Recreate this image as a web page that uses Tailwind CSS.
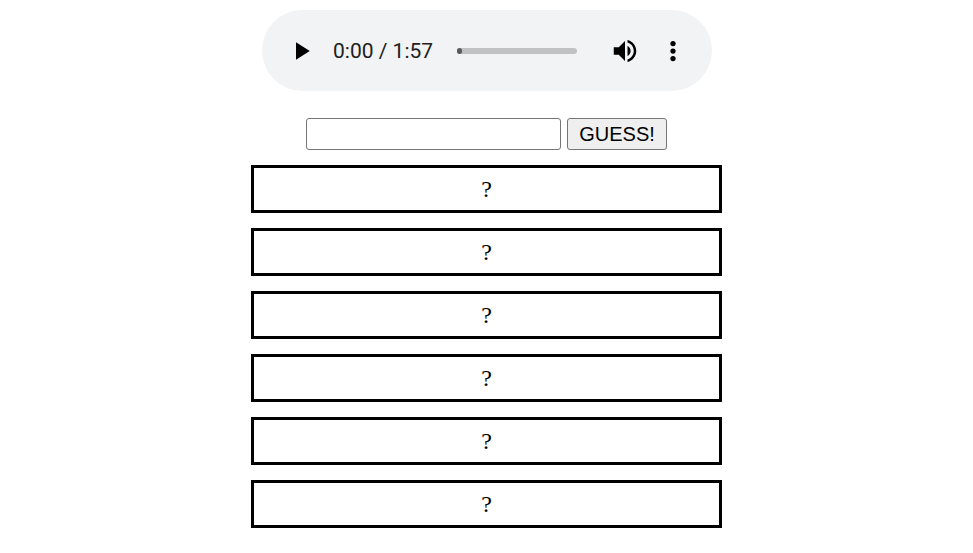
<!DOCTYPE html>
<html lang="en">
<head>
<meta charset="utf-8">
<title>Guess the song</title>
<script src="https://cdn.jsdelivr.net/npm/@tailwindcss/browser@4"></script>
</head>
<body class="bg-white text-black h-[553px] overflow-hidden">
<main class="w-[471px] ml-[251px] pt-[10px] flex flex-col">
  <div class="ml-[11px] w-[450px] h-[81px] rounded-full bg-[#f1f3f4] flex items-center pl-6">
    <button class="size-[30px] shrink-0" aria-label="Play">
      <svg class="size-[30px]" viewBox="0 0 24 24"><path d="M8 5v14l11-7z"/></svg>
    </button>
    <div class="ml-[17px] w-[124px] shrink-0 whitespace-nowrap font-['Roboto',sans-serif] text-[21px] leading-[30px] text-[#212121]">0:00 / 1:57</div>
    <div class="w-[120px] h-[6px] shrink-0 rounded-full bg-[#c1c2c3]">
      <div class="w-[5px] h-[6px] rounded-full bg-[#5a5b5c]"></div>
    </div>
    <button class="ml-[33px] size-[30px] shrink-0" aria-label="Mute">
      <svg class="size-[30px]" viewBox="0 0 24 24"><path d="M3 9v6h4l5 5V4L7 9H3zm13.5 3c0-1.77-1.02-3.29-2.5-4.03v8.05c1.48-.73 2.5-2.25 2.5-4.02zM14 3.23v2.06c2.89.86 5 3.54 5 6.71s-2.11 5.85-5 6.71v2.06c4.01-.91 7-4.49 7-8.77s-2.99-7.86-7-8.77z"/></svg>
    </button>
    <button class="ml-[18px] size-[30px] shrink-0" aria-label="More">
      <svg class="size-[30px]" viewBox="0 0 24 24"><circle cx="12" cy="6" r="2.1"/><circle cx="12" cy="12" r="2.1"/><circle cx="12" cy="18" r="2.1"/></svg>
    </button>
  </div>
  <form class="mt-[27px] ml-[55px] flex gap-[6px] font-['Liberation_Sans',Arial,sans-serif] text-[20px]">
    <input type="text" aria-label="Guess" class="w-[255px] h-8 border border-[#767676] rounded-[3px] bg-white px-1">
    <button type="button" class="w-[100px] h-8 border border-[#767676] rounded-[3px] bg-[#efefef] leading-[30px] whitespace-nowrap">GUESS!</button>
  </form>
  <div class="mt-[15px] flex flex-col gap-[15px] font-['Liberation_Serif','Times_New_Roman',serif] text-2xl leading-[42px] text-center">
    <div class="h-12 border-3 border-black">?</div>
    <div class="h-12 border-3 border-black">?</div>
    <div class="h-12 border-3 border-black">?</div>
    <div class="h-12 border-3 border-black">?</div>
    <div class="h-12 border-3 border-black">?</div>
    <div class="h-12 border-3 border-black">?</div>
  </div>
</main>
</body>
</html>
